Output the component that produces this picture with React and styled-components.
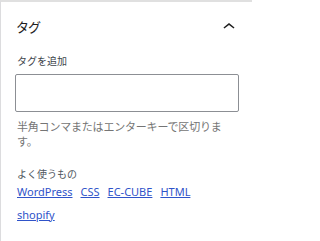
import React from "react";
import styled, { createGlobalStyle } from "styled-components";

const Global = createGlobalStyle`
  html, body { margin: 0; padding: 0; background: #fff; }
  body { font-family: "Noto Sans", "Noto Sans CJK JP", sans-serif; overflow: hidden; }
`;

const Panel = styled.div`
  box-sizing: border-box;
  width: 252px;
  min-height: 100vh;
  border-top: 2px solid #e0e0e0;
  border-left: 1px solid #dcdcde;
  background: #fff;
  padding: 0 13px 0 14px;
`;

const Header = styled.div`
  display: flex;
  align-items: center;
  justify-content: space-between;
  padding: 13px 0 0 1px;
  height: 24px;
`;

const Title = styled.h2`
  margin: 0;
  font-size: 13px;
  font-weight: 400;
  letter-spacing: -1px;
  color: #1e1e1e;
  line-height: 16px;
`;

const Toggle = styled.button`
  display: flex;
  border: 0;
  background: none;
  padding: 0;
  margin-right: -2px;
  cursor: pointer;
  svg { width: 24px; height: 24px; fill: #1e1e1e; }
`;

const Body = styled.div`
  padding-top: 16px;
  display: flex;
  flex-direction: column;
`;

const Label = styled.label`
  font-size: 10px;
  line-height: 12px;
  color: #3c434a;
  padding-left: 2px;
  margin-bottom: 7px;
`;

const Input = styled.input`
  box-sizing: border-box;
  width: 224px;
  height: 38px;
  border: 1px solid #8c8f94;
  border-radius: 2px;
  background: #fff;
  margin: 0;
`;

const Help = styled.p`
  margin: 7px 0 0;
  padding-left: 2px;
  max-width: 210px;
  font-size: 11px;
  letter-spacing: -0.2px;
  line-height: 15px;
  color: #757575;
`;

const MostUsed = styled.div`
  margin-top: 19px;
  padding-left: 2px;
`;

const Heading = styled.h3`
  margin: 0;
  font-size: 10px;
  font-weight: 400;
  line-height: 12px;
  color: #50575e;
`;

const Links = styled.ul`
  list-style: none;
  margin: 4px 0 0;
  padding: 0;
  max-width: 200px;
  display: flex;
  flex-wrap: wrap;
  column-gap: 8px;
  row-gap: 7px;
`;

const Tag = styled.li`
  font-size: 11px;
  line-height: 16px;
  a {
    color: #2f53c9;
    text-decoration: underline;
    text-underline-offset: 1px;
  }
`;

const tags = ["WordPress", "CSS", "EC-CUBE", "HTML", "shopify"];

export default function App() {
  return (
    <>
      <Global />
      <Panel>
        <Header>
          <Title>タグ</Title>
          <Toggle aria-label="閉じる">
            <svg viewBox="0 0 24 24" aria-hidden="true">
              <path d="M6.5 12.4L12 8l5.5 4.4-.9 1.2L12 10l-4.6 3.6-1-1.2z" />
            </svg>
          </Toggle>
        </Header>
        <Body>
          <Label>タグを追加</Label>
          <Input type="text" />
          <Help>半角コンマまたはエンターキーで区切ります。</Help>
          <MostUsed>
            <Heading>よく使うもの</Heading>
            <Links>
              {tags.map((t) => (
                <Tag key={t}>
                  <a href="#">{t}</a>
                </Tag>
              ))}
            </Links>
          </MostUsed>
        </Body>
      </Panel>
    </>
  );
}
